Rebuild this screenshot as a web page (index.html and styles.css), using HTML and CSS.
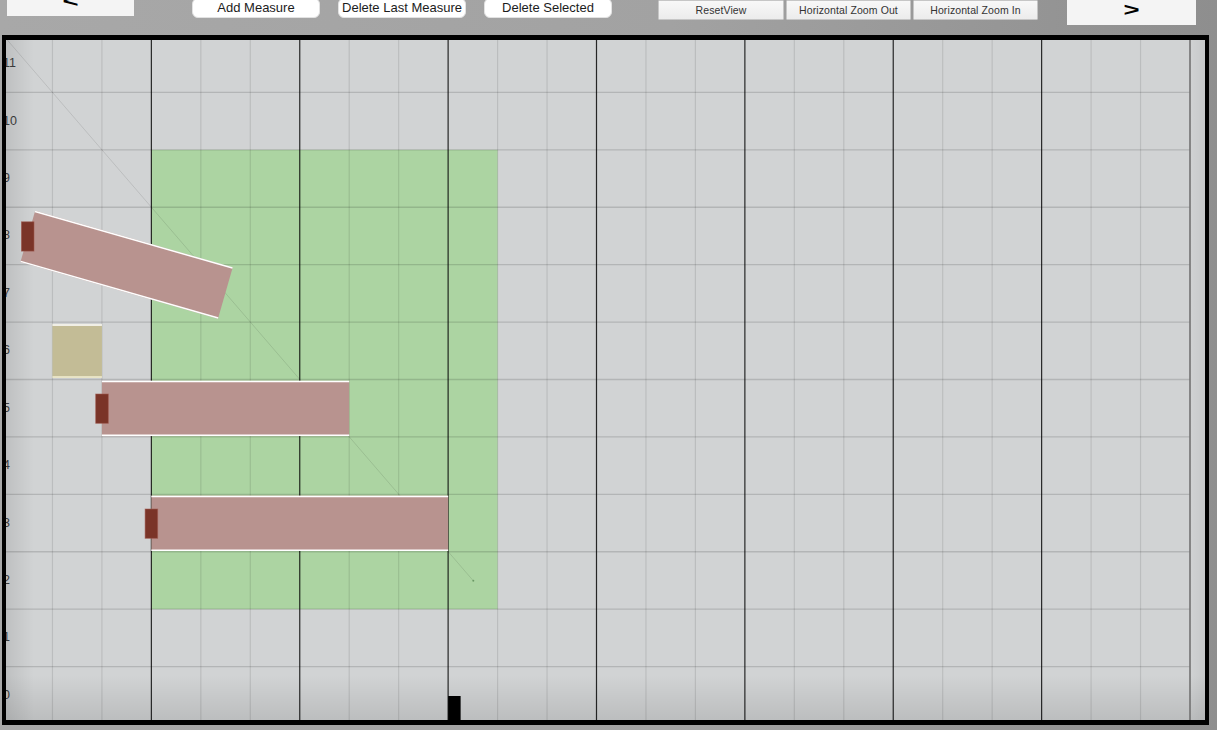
FILE: index.html
```html
<!DOCTYPE html>
<html lang="en">
<head>
<meta charset="utf-8">
<title>Measure Editor</title>
<link rel="stylesheet" href="styles.css">
</head>
<body>
<div class="app">
  <header class="toolbar">
    <button class="nav nav-prev"><span class="chev">&lt;</span></button>
    <div class="group group-edit">
      <button class="pill">Add Measure</button>
      <button class="pill">Delete Last Measure</button>
      <button class="pill">Delete Selected</button>
    </div>
    <div class="group group-view">
      <button class="flat flat-wide">ResetView</button>
      <button class="flat">Horizontal Zoom Out</button>
      <button class="flat">Horizontal Zoom In</button>
    </div>
    <button class="nav nav-next"><span class="chev">&gt;</span></button>
  </header>

  <main class="stage">
    <svg class="plot" width="1199" height="680" viewBox="6 40 1199 680" xmlns="http://www.w3.org/2000/svg">
      <rect class="zone" x="151.37" y="149.83" width="346.21" height="459.34"/>

      <g class="v-minor">
        <line x1="52.46" y1="35" x2="52.46" y2="724"/>
        <line x1="101.92" y1="35" x2="101.92" y2="724"/>
        <line x1="200.83" y1="35" x2="200.83" y2="724"/>
        <line x1="250.29" y1="35" x2="250.29" y2="724"/>
        <line x1="349.21" y1="35" x2="349.21" y2="724"/>
        <line x1="398.66" y1="35" x2="398.66" y2="724"/>
        <line x1="497.58" y1="35" x2="497.58" y2="724"/>
        <line x1="547.04" y1="35" x2="547.04" y2="724"/>
        <line x1="645.95" y1="35" x2="645.95" y2="724"/>
        <line x1="695.41" y1="35" x2="695.41" y2="724"/>
        <line x1="794.33" y1="35" x2="794.33" y2="724"/>
        <line x1="843.79" y1="35" x2="843.79" y2="724"/>
        <line x1="942.7" y1="35" x2="942.7" y2="724"/>
        <line x1="992.16" y1="35" x2="992.16" y2="724"/>
        <line x1="1091.08" y1="35" x2="1091.08" y2="724"/>
        <line x1="1140.54" y1="35" x2="1140.54" y2="724"/>
      </g>

      <g class="h-lines">
        <line x1="3" y1="92.42" x2="1190" y2="92.42"/>
        <line x1="3" y1="149.83" x2="1190" y2="149.83"/>
        <line x1="3" y1="207.25" x2="1190" y2="207.25"/>
        <line x1="3" y1="264.67" x2="1190" y2="264.67"/>
        <line x1="3" y1="322.08" x2="1190" y2="322.08"/>
        <line x1="3" y1="379.5" x2="1190" y2="379.5"/>
        <line x1="3" y1="436.92" x2="1190" y2="436.92"/>
        <line x1="3" y1="494.33" x2="1190" y2="494.33"/>
        <line x1="3" y1="551.75" x2="1190" y2="551.75"/>
        <line x1="3" y1="609.17" x2="1190" y2="609.17"/>
        <line x1="3" y1="666.58" x2="1190" y2="666.58"/>
      </g>

      <g class="v-major">
        <line x1="151.37" y1="35" x2="151.37" y2="724"/>
        <line x1="299.75" y1="35" x2="299.75" y2="724"/>
        <line x1="448.12" y1="35" x2="448.12" y2="724"/>
        <line x1="596.5" y1="35" x2="596.5" y2="724"/>
        <line x1="744.87" y1="35" x2="744.87" y2="724"/>
        <line x1="893.24" y1="35" x2="893.24" y2="724"/>
        <line x1="1041.62" y1="35" x2="1041.62" y2="724"/>
      </g>
      <line class="v-end" x1="1190" y1="35" x2="1190" y2="724"/>

      <line class="diag" x1="3" y1="35" x2="473.3" y2="580.8"/>
      <circle class="diag-dot" cx="473.3" cy="580.8" r="1"/>

      <g class="labels">
        <text x="3" y="67.2">11</text>
        <text x="3" y="124.6">10</text>
        <text x="3" y="182">9</text>
        <text x="3" y="239.4">8</text>
        <text x="3" y="296.8">7</text>
        <text x="3" y="354.2">6</text>
        <text x="3" y="411.6">5</text>
        <text x="3" y="469">4</text>
        <text x="3" y="526.5">3</text>
        <text x="3" y="583.9">2</text>
        <text x="3" y="641.3">1</text>
        <text x="3" y="698.7">0</text>
      </g>

      <g class="block-tan">
        <rect x="52.46" y="324.1" width="49.46" height="53.6"/>
        <line class="edge" x1="52.46" y1="324.9" x2="101.92" y2="324.9"/>
        <line class="edge-cream" x1="52.46" y1="377" x2="101.92" y2="377"/>
      </g>

      <g class="bar" transform="translate(27.8 236.4) rotate(16)">
        <rect x="0" y="-26.7" width="205.5" height="53.4"/>
        <line class="edge" x1="0" y1="-26" x2="205.5" y2="-26"/>
        <line class="edge" x1="0" y1="26" x2="205.5" y2="26"/>
      </g>

      <g class="bar">
        <rect x="101.92" y="380.8" width="247.29" height="55.3"/>
        <line class="edge" x1="101.92" y1="381.55" x2="349.21" y2="381.55"/>
        <line class="edge" x1="101.92" y1="435.35" x2="349.21" y2="435.35"/>
      </g>

      <g class="bar">
        <rect x="151.37" y="495.63" width="296.75" height="55.3"/>
        <line class="edge" x1="151.37" y1="496.38" x2="448.12" y2="496.38"/>
        <line class="edge" x1="151.37" y1="550.18" x2="448.12" y2="550.18"/>
      </g>

      <g class="handles">
        <rect x="21.4" y="221.8" width="12.6" height="29.3"/>
        <rect x="95.7" y="394" width="12.6" height="29.3"/>
        <rect x="145.1" y="509" width="12.6" height="29.3"/>
      </g>

      <rect class="marker" x="448.12" y="696" width="12.5" height="30"/>
    </svg>
  </main>
</div>
</body>
</html>
```

FILE: styles.css
```css
* {
  box-sizing: border-box;
}

html,
body {
  margin: 0;
  height: 100%;
}

body {
  background: linear-gradient(to right, #a8a8a8 0%, #a2a2a2 55%, #8e8e8e 100%);
  font-family: "Liberation Sans", Arial, sans-serif;
  overflow: hidden;
}

.toolbar {
  display: flex;
  align-items: flex-start;
  height: 35px;
}

button {
  font-family: inherit;
  margin: 0;
  padding: 0;
  cursor: pointer;
}

.nav {
  height: 25px;
  background: #f4f4f4;
  border: none;
  border-radius: 0;
  color: #000;
  font-weight: bold;
  font-size: 19px;
  line-height: 19px;
  padding-bottom: 7px;
}

.chev {
  display: inline-block;
  transform: scaleX(1.45);
}

.nav-prev {
  width: 127px;
  margin-left: 7px;
  margin-top: -9px;
  padding-bottom: 11px;
}

.nav-next {
  width: 129px;
  margin-left: 29px;
}

.group {
  display: flex;
}

.group-edit {
  margin-left: 58px;
  gap: 18px;
}

.pill {
  width: 128px;
  height: 20px;
  margin-top: -2px;
  background: #ffffff;
  border: 1px solid #e2e2e2;
  border-radius: 6px;
  color: #1c1c1c;
  font-size: 13px;
  line-height: 18px;
}

.group-view {
  margin-left: 46px;
  gap: 2px;
}

.flat {
  width: 125px;
  height: 20px;
  background: linear-gradient(#f8f8f8, #ececec);
  border: 1px solid #c6c6c6;
  border-radius: 1px;
  color: #333;
  font-size: 10.5px;
  letter-spacing: 0.1px;
  line-height: 18px;
  padding-bottom: 2px;
}

.flat-wide {
  width: 126px;
}

.stage {
  width: 1207px;
  height: 690px;
  margin-left: 2px;
  border-style: solid;
  border-color: #000;
  border-width: 5px 4px 5px 4px;
  overflow: hidden;
  background:
    linear-gradient(to right, rgba(0, 0, 0, 0.09), rgba(0, 0, 0, 0) 28px),
    linear-gradient(to left, rgba(0, 0, 0, 0.05), rgba(0, 0, 0, 0) 16px),
    linear-gradient(to top, rgba(0, 0, 0, 0.10), rgba(0, 0, 0, 0) 45px),
    #d1d3d4;
}

.plot {
  display: block;
}

.zone {
  fill: #acd4a2;
}

.v-minor line {
  stroke: rgba(0, 0, 0, 0.10);
  stroke-width: 1.2;
}

.h-lines line {
  stroke: rgba(0, 0, 0, 0.14);
  stroke-width: 1.3;
}

.v-major line {
  stroke: rgba(0, 0, 0, 0.82);
  stroke-width: 1.2;
}

.v-end {
  stroke: #727272;
  stroke-width: 1.6;
}

.diag {
  stroke: rgba(0, 0, 0, 0.10);
  stroke-width: 1;
}

.diag-dot {
  fill: rgba(0, 60, 0, 0.35);
}

.labels text {
  font-family: "Liberation Sans", Arial, sans-serif;
  font-size: 12.5px;
  fill: #3a3a3a;
}

.block-tan rect {
  fill: #c3bc96;
}

.bar rect {
  fill: #b8938f;
}

.edge {
  stroke: #ffffff;
  stroke-width: 1.5;
}

.edge-cream {
  stroke: #f3efd2;
  stroke-width: 1.4;
}

.handles rect {
  fill: #7a3428;
  stroke: rgba(160, 90, 80, 0.7);
  stroke-width: 0.8;
}

.marker {
  fill: #000;
}
```
